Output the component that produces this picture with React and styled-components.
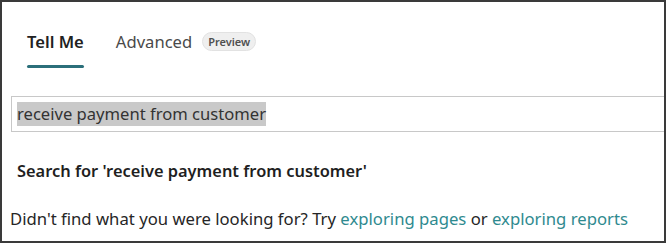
import React from "react";
import styled, { createGlobalStyle } from "styled-components";

const GlobalStyle = createGlobalStyle`
  html, body {
    margin: 0;
    padding: 0;
    background: #ffffff;
  }
  * {
    box-sizing: border-box;
  }
`;

const Frame = styled.div`
  width: 666px;
  height: 243px;
  border: 2px solid #3a3a3a;
  background: #ffffff;
  font-family: "Noto Sans", "Open Sans", sans-serif;
  color: #262626;
  overflow: hidden;
  display: flex;
  flex-direction: column;
`;

const TabBar = styled.div`
  display: flex;
  align-items: flex-start;
  gap: 32px;
  padding: 24px 0 0 25px;
  height: 94px;
`;

const Tab = styled.div`
  display: flex;
  align-items: center;
  gap: 10px;
  height: 30px;
  font-size: 16.6px;
  position: relative;
  font-weight: ${(p) => (p.$active ? 600 : 400)};
  color: ${(p) => (p.$active ? "#212121" : "#4a4a4a")};

  &::after {
    content: "";
    display: ${(p) => (p.$active ? "block" : "none")};
    position: absolute;
    left: 0;
    right: 0;
    top: 39px;
    height: 3px;
    border-radius: 2px;
    background: #2b6f7a;
  }
`;

const Pill = styled.span`
  display: inline-flex;
  align-items: center;
  height: 19px;
  padding: 0 5px;
  border-radius: 10px;
  background: #efefef;
  border: 1px solid #e2e2e2;
  font-size: 11px;
  font-weight: 600;
  color: #505050;
`;

const InputBox = styled.div`
  margin-left: 9px;
  margin-right: -6px;
  height: 36px;
  border: 1px solid #c8c8c8;
  border-right: none;
  display: flex;
  align-items: center;
  padding-left: 5px;
`;

const Selected = styled.span`
  background: #c9c9c9;
  font-size: 16.6px;
  line-height: 24px;
  color: #333333;
`;

const SearchFor = styled.div`
  padding: 27px 0 0 15px;
  font-size: 16.4px;
  font-weight: 600;
  color: #1f1f1f;
`;

const Hint = styled.div`
  padding: 25px 0 0 8px;
  font-size: 16.7px;
  color: #262626;
`;

const Link = styled.a`
  color: #2f8a8f;
  text-decoration: none;
`;

export default function App() {
  return (
    <>
      <GlobalStyle />
      <Frame>
        <TabBar>
          <Tab $active>Tell Me</Tab>
          <Tab>
            Advanced <Pill>Preview</Pill>
          </Tab>
        </TabBar>
        <InputBox>
          <Selected>receive payment from customer</Selected>
        </InputBox>
        <SearchFor>Search for 'receive payment from customer'</SearchFor>
        <Hint>
          Didn't find what you were looking for? Try{" "}
          <Link href="#">exploring pages</Link> or{" "}
          <Link href="#">exploring reports</Link>
        </Hint>
      </Frame>
    </>
  );
}
